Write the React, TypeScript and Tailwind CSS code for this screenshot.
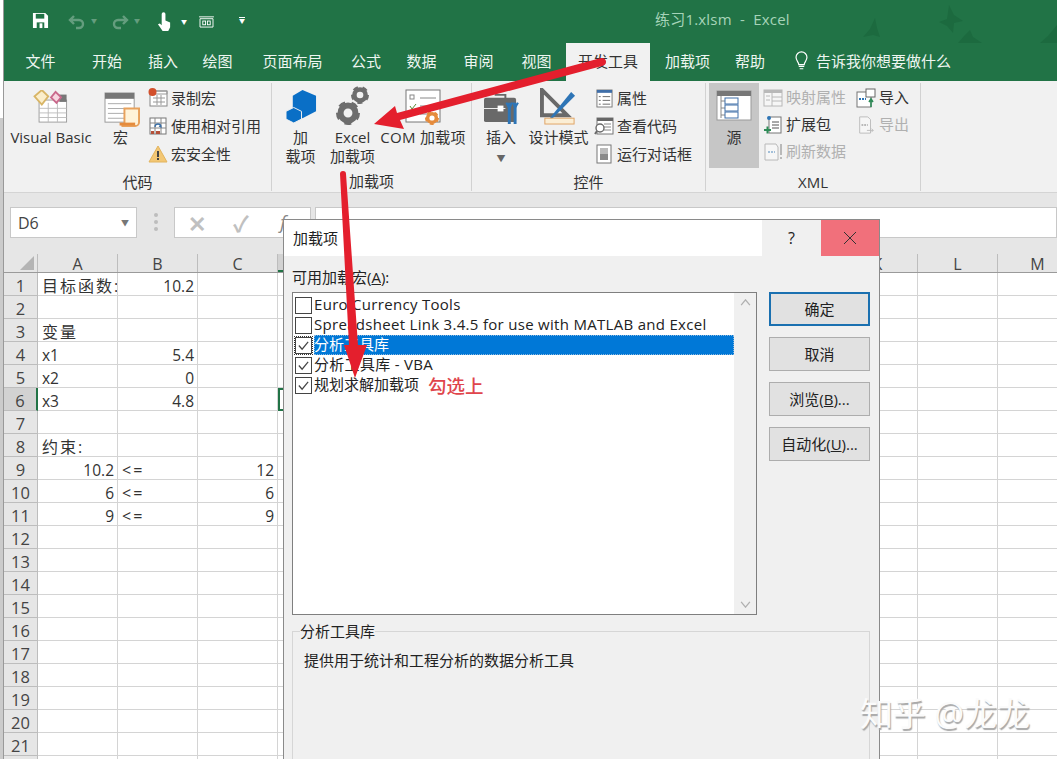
import type { ReactNode } from "react";

const TABS = [
  ["文件", "w-[73px]"],
  ["开始", "w-[60px]"],
  ["插入", "w-[52px]"],
  ["绘图", "w-[57px]"],
  ["页面布局", "w-[93px]"],
  ["公式", "w-[54px]"],
  ["数据", "w-[57px]"],
  ["审阅", "w-[57px]"],
  ["视图", "w-[59px]"],
];

const COLS = ["A", "B", "C", "D", "E", "F", "G", "H", "I", "J", "K", "L", "M"];

// value, right aligned, wide-set text
const CELLS: Record<string, [string, boolean?, boolean?]> = {
  A1: ["目标函数:", false, true],
  B1: ["10.2", true],
  A3: ["变量", false, true],
  A4: ["x1"],
  B4: ["5.4", true],
  A5: ["x2"],
  B5: ["0", true],
  A6: ["x3"],
  B6: ["4.8", true],
  A8: ["约束:", false, true],
  A9: ["10.2", true],
  B9: ["<=", false, true],
  C9: ["12", true],
  A10: ["6", true],
  B10: ["<=", false, true],
  C10: ["6", true],
  A11: ["9", true],
  B11: ["<=", false, true],
  C11: ["9", true],
};

const ADDINS = [
  { name: "Euro Currency Tools", checked: false, latin: true },
  { name: "Spreadsheet Link 3.4.5 for use with MATLAB and Excel", checked: false, latin: true },
  { name: "分析工具库", checked: true, active: true },
  { name: "分析工具库 - VBA", checked: true, latin: true },
  { name: "规划求解加载项", checked: true },
];

function Gear({ x, y, r, fill = "#6d6d6d" }: { x: number; y: number; r: number; fill?: string }) {
  return (
    <g>
      <circle cx={x} cy={y} r={r * 0.62} fill="none" stroke={fill} strokeWidth={r * 0.5} />
      <circle cx={x} cy={y} r={r * 0.86} fill="none" stroke={fill} strokeWidth={r * 0.28} strokeDasharray={`${r * 0.55} ${r * 0.53}`} />
    </g>
  );
}

function BigButton({ w, icon, label, label2, wide }: { w: string; icon: ReactNode; label: string; label2?: ReactNode; wide?: boolean }) {
  return (
    <div className={`${w} flex flex-col items-center shrink-0`}>
      <div className="h-[44px] flex items-end justify-center">{icon}</div>
      <div className={`mt-[1px] leading-[19px] text-center whitespace-nowrap ${wide ? "tracking-[0.3px]" : ""}`}>{label}</div>
      {label2 && <div className="leading-[19px] text-center whitespace-nowrap">{label2}</div>}
    </div>
  );
}

function SmallRow({ icon, label, muted, h = "h-[28px]" }: { icon: ReactNode; label: string; muted?: boolean; h?: string }) {
  return (
    <div className={`${h} flex items-center gap-[3px] whitespace-nowrap`}>
      <div className="w-[20px] flex justify-center">{icon}</div>
      <span className={muted ? "text-[#b0b0b0]" : ""}>{label}</span>
    </div>
  );
}

function RibbonGroup({ w, label, children }: { w: string; label: string; children: ReactNode }) {
  return (
    <div className={`${w} h-[108px] mt-[2px] border-r border-[#d2d2d2] flex flex-col shrink-0`}>
      <div className="flex h-[86px]">{children}</div>
      <div className="text-center leading-[20px] mt-[4px]">{label}</div>
    </div>
  );
}

function Ribbon() {
  return (
    <div className="h-[112px] bg-[#f1f1f1] border-b border-[#d4d4d4] flex text-[15px] text-[#333]">
      <RibbonGroup w="w-[268px]" label="代码">
        <div className="w-[3px] shrink-0" />
        <BigButton
          w="w-[88px]"
          label="Visual Basic"
          icon={
            <svg viewBox="0 0 38 36" className="w-[36px] h-[33px] mb-[4px]">
              <rect x="6" y="11" width="30" height="24" fill="#fff" stroke="#999" />
              <rect x="28" y="5" width="8" height="8" fill="#777" />
              <path d="M6 20h30M6 25h30M6 30h30M16 14v21M26 14v21" stroke="#bbb" fill="none" />
              <path d="M9 0l7 7-7 9-8-9z" fill="#fbeecb" stroke="#d8b566" strokeWidth="2" />
              <path d="M24 2l6 6-5 6-6-6z" fill="#f7d6e0" stroke="#c9688b" strokeWidth="2" />
            </svg>
          }
        />
        <BigButton
          w="w-[51px]"
          label="宏"
          icon={
            <svg viewBox="0 0 38 36" className="w-[37px] h-[35px] ml-[3px]">
              <rect x="1" y="1" width="30" height="30" fill="#fff" stroke="#999" />
              <rect x="1" y="1" width="30" height="6" fill="#777" />
              <path d="M4 12h24M4 17h24M4 22h24M4 27h24" stroke="#aaa" />
              <path d="M21 17h15v14a4 4 0 0 1-4 4H18a4 4 0 0 0 3-4z" fill="#fff3d9" stroke="#e8a15c" strokeWidth="2" />
              <path d="M16 33h16" stroke="#e58b3c" strokeWidth="3" />
            </svg>
          }
        />
        <div className="ml-[2px] mt-[1px]">
          <SmallRow
            label="录制宏"
            icon={
              <svg viewBox="0 0 20 20" className="w-[20px] h-[20px]">
                <rect x="2" y="3" width="17" height="15" fill="#fff" stroke="#888" />
                <path d="M2 3h17v3H2zM5 10h12M5 14h12M9 7v10M13 7v10" stroke="#999" fill="none" />
                <circle cx="4.500" cy="4" r="4" fill="#d2502c" />
              </svg>
            }
          />
          <SmallRow
            label="使用相对引用"
            icon={
              <svg viewBox="0 0 20 20" className="w-[20px] h-[20px]">
                <rect x="2" y="2" width="16" height="16" fill="#fff" stroke="#777" />
                <path d="M2 7h16M2 12h16M7 2v16M13 2v16" stroke="#888" />
                <path d="M7 11a3 3 0 0 1 6 0l-2-1" stroke="#3a6ea5" fill="none" strokeWidth="1.300" />
                <path d="M3 15h3v3H3zM8 15h4v3H8z" fill="#b5513a" />
              </svg>
            }
          />
          <SmallRow
            label="宏安全性"
            icon={
              <svg viewBox="0 0 20 20" className="w-[20px] h-[20px]">
                <path d="M10 2l9 16H1z" fill="#f3c774" stroke="#e2b45f" />
                <path d="M9 7h2v6H9zM9 14h2v2H9z" fill="#444" />
              </svg>
            }
          />
        </div>
      </RibbonGroup>

      <RibbonGroup w="w-[200px]" label="加载项">
        <BigButton
          w="w-[57px]"
          label="加"
          label2="载项"
          icon={
            <svg viewBox="0 0 32 34" className="w-[31px] h-[33px] mb-[4px] -mr-[2px]">
              <path d="M17 0l14 6v16l-14 7-10-5V6z" fill="#0a6fc6" />
              <path d="M8 18l8 4v8l-8 4-8-4v-8z" fill="#0a6fc6" stroke="#f1f1f1" strokeWidth="1" />
            </svg>
          }
        />
        <BigButton
          w="w-[47px]"
          label="Excel"
          label2="加载项"
          icon={
            <svg viewBox="0 0 34 40" className="w-[34px] h-[40px] mb-[1px]">
              <Gear x={24} y={9} r={9} />
              <Gear x={12} y={27} r={12} />
            </svg>
          }
        />
        <BigButton
          w="w-[94px]"
          wide
          label="COM 加载项"
          icon={
            <svg viewBox="0 0 36 36" className="w-[36px] h-[36px] mb-[2px]">
              <rect x="1" y="1" width="34" height="32" fill="#fff" stroke="#777" />
              <path d="M15 9h16M15 17h16M15 25h8" stroke="#888" />
              <rect x="5" y="6" width="4" height="4" fill="none" stroke="#888" />
              <path d="M5 17l2 3 4-5" stroke="#5d8a3a" fill="none" />
              <Gear x={27} y={29} r={7} fill="#e58b3c" />
            </svg>
          }
        />
      </RibbonGroup>

      <RibbonGroup w="w-[234px]" label="控件">
        <BigButton
          w="w-[58px]"
          label="插入"
          label2={<span className="text-[9px] text-[#666]">▼</span>}
          icon={
            <svg viewBox="0 0 38 36" className="w-[37px] h-[35px] mb-[1px]">
              <rect x="1" y="7" width="33" height="25" rx="2" fill="#696969" />
              <path d="M12 4h11v4" stroke="#696969" fill="none" strokeWidth="2" />
              <path d="M1 18h22" stroke="#f1f1f1" />
              <rect x="15" y="15" width="6" height="6" fill="#fff" />
              <path d="M27 12v22M33 12v22" stroke="#2e75b6" strokeWidth="3" />
              <path d="M24 12l3 6 3-6M31 12l2 5 3-5" stroke="#2e75b6" fill="none" strokeWidth="2" />
            </svg>
          }
        />
        <BigButton
          w="w-[57px]"
          label="设计模式"
          icon={
            <svg viewBox="0 0 38 38" className="w-[37px] h-[37px] mb-[2px]">
              <path d="M2 2v26h26z" fill="none" stroke="#696969" strokeWidth="4" />
              <path d="M10 31L32 4l4 4-24 24z" fill="#2e75b6" />
              <rect x="5" y="31" width="30" height="6" fill="#fbeed5" stroke="#e0a465" />
            </svg>
          }
        />
        <div className="ml-[7px] mt-[1px]">
          <SmallRow
            label="属性"
            icon={
              <svg viewBox="0 0 18 20" className="w-[17px] h-[19px]">
                <rect x="1" y="1" width="16" height="18" fill="#fff" stroke="#777" />
                <rect x="1" y="1" width="16" height="3" fill="#3f6ea8" />
                <path d="M7 8h8M7 12h8M7 16h8M3 8h2M3 12h2M3 16h2" stroke="#666" />
              </svg>
            }
          />
          <SmallRow
            label="查看代码"
            icon={
              <svg viewBox="0 0 20 20" className="w-[20px] h-[20px]">
                <rect x="3" y="2" width="16" height="16" fill="#fff" stroke="#777" />
                <rect x="3" y="2" width="16" height="3" fill="#666" />
                <path d="M10 8h7M10 11h7M10 14h7" stroke="#888" />
                <circle cx="6" cy="12" r="4" fill="#fff" stroke="#6a6a6a" strokeWidth="1.400" />
                <path d="M3 15l-2 3" stroke="#6a6a6a" strokeWidth="2" />
              </svg>
            }
          />
          <SmallRow
            label="运行对话框"
            icon={
              <svg viewBox="0 0 16 20" className="w-[16px] h-[20px]">
                <rect x="1" y="1" width="14" height="18" fill="#fff" stroke="#777" />
                <rect x="4" y="4" width="8" height="12" fill="#bbb" />
                <rect x="4" y="10" width="8" height="6" fill="#8a8a8a" />
              </svg>
            }
          />
        </div>
      </RibbonGroup>

      <RibbonGroup w="w-[215px]" label="XML">
        <div className="ml-[3px] w-[50px] h-[85px] bg-[#c6c6c6] flex flex-col items-center pt-[7px] shrink-0">
          <svg viewBox="0 0 36 32" className="w-[36px] h-[32px]">
            <rect x="1" y="1" width="34" height="29" fill="#fff" stroke="#999" />
            <rect x="1" y="1" width="34" height="5" fill="#777" />
            <path d="M5 6v22M5 11h4M5 18h4M5 25h4" stroke="#888" fill="none" />
            <rect x="9" y="8" width="13" height="6" fill="#fff" stroke="#3f6ea8" />
            <rect x="9" y="15" width="13" height="6" fill="#fff" stroke="#3f6ea8" />
            <rect x="9" y="22" width="13" height="6" fill="#fff" stroke="#3f6ea8" />
          </svg>
          <div className="mt-[4px] leading-[22px]">源</div>
        </div>
        <div className="ml-[4px] w-[93px] mt-[1px] shrink-0">
          <SmallRow
            muted
            h="h-[27px]"
            label="映射属性"
            icon={
              <svg viewBox="0 0 20 20" className="w-[20px] h-[20px] opacity-40">
                <rect x="1" y="2" width="18" height="16" fill="#fff" stroke="#666" />
                <rect x="1" y="2" width="18" height="3" fill="#666" />
                <path d="M9 5v13M9 9h10M9 13h10M3 8h4M3 12h4" stroke="#666" />
              </svg>
            }
          />
          <SmallRow
            h="h-[27px]"
            label="扩展包"
            icon={
              <svg viewBox="0 0 20 20" className="w-[20px] h-[20px]">
                <rect x="6" y="2" width="12" height="16" fill="#fff" stroke="#777" />
                <path d="M9 7h7M9 10h7M9 13h7" stroke="#555" />
                <circle cx="6" cy="3" r="2" fill="#2e75b6" />
                <path d="M1 15h7M4.500 11.500v7" stroke="#2e8b57" strokeWidth="2" />
              </svg>
            }
          />
          <SmallRow
            muted
            h="h-[27px]"
            label="刷新数据"
            icon={
              <svg viewBox="0 0 20 20" className="w-[20px] h-[20px] opacity-40">
                <path d="M2 2h11l2 3v13H2z" fill="#fff" stroke="#666" />
                <path d="M5 10h7" stroke="#2e75b6" strokeWidth="2" strokeDasharray="2 1" />
                <path d="M18 2v11M18 15v2" stroke="#666" strokeWidth="2" />
              </svg>
            }
          />
        </div>
        <div className="mt-[1px]">
          <SmallRow
            h="h-[27px]"
            label="导入"
            icon={
              <svg viewBox="0 0 20 20" className="w-[20px] h-[20px]">
                <rect x="1" y="4" width="14" height="15" fill="#fff" stroke="#777" />
                <rect x="10" y="1" width="9" height="8" fill="#fff" stroke="#666" />
                <path d="M3 11h7" stroke="#2e75b6" strokeWidth="2" strokeDasharray="2 1" />
                <path d="M15 19v-7m-2 2l2-3 2 3" stroke="#2e8b57" strokeWidth="1.600" fill="none" />
              </svg>
            }
          />
          <SmallRow
            muted
            h="h-[27px]"
            label="导出"
            icon={
              <svg viewBox="0 0 20 20" className="w-[18px] h-[20px] opacity-40">
                <path d="M3 1h9l3 3v15H3z" fill="#fff" stroke="#666" />
                <path d="M5 10h7" stroke="#666" strokeWidth="2" strokeDasharray="2 1" />
                <path d="M11 16h7m-2-2l2 2-2 2" stroke="#666" fill="none" />
              </svg>
            }
          />
        </div>
      </RibbonGroup>
    </div>
  );
}

function Header() {
  return (
    <div className="bg-[#217346] h-[81px] relative">
      <div className="h-[43px] flex items-center text-white">
        <svg viewBox="0 0 18 18" className="ml-[28px] w-[17px] h-[17px] -mt-[2px]">
          <path d="M1 1h13l3 3v13H1z" fill="#fff" />
          <rect x="4" y="2" width="9" height="5" fill="#217346" />
          <rect x="5" y="11" width="8" height="6" fill="#217346" />
          <rect x="8" y="12" width="3" height="5" fill="#fff" />
        </svg>
        <svg viewBox="0 0 18 16" className="ml-[19px] w-[18px] h-[16px] opacity-30">
          <path d="M6 2L2 6l4 4M2 6h9a4 4 0 0 1 0 8H8" fill="none" stroke="#fff" strokeWidth="2.400" />
        </svg>
        <span className="ml-[5px] text-[6px] opacity-30">▼</span>
        <svg viewBox="0 0 18 16" className="ml-[14px] w-[18px] h-[16px] opacity-30">
          <path d="M12 2l4 4-4 4M16 6H7a4 4 0 0 0 0 8h3" fill="none" stroke="#fff" strokeWidth="2.400" />
        </svg>
        <span className="ml-[5px] text-[6px] opacity-30">▼</span>
        <svg viewBox="0 0 16 20" className="ml-[17px] w-[15px] h-[19px]">
          <path d="M5 2a2 2 0 0 1 4 0v7l5 2v5l-2 4H6l-5-7 2-1 2 2z" fill="#fff" />
        </svg>
        <span className="ml-[9px] text-[6px] leading-none">▼</span>
        <svg viewBox="0 0 18 14" className="ml-[11px] w-[17px] h-[13px]">
          <path d="M1 2h16M2 4h14v9H2z" fill="none" stroke="#fff" />
          <rect x="5" y="6.500" width="3" height="4" fill="none" stroke="#fff" />
          <rect x="10" y="6.500" width="3" height="4" fill="none" stroke="#fff" />
        </svg>
        <span className="ml-[24px] text-[6px] leading-none -mt-[2px] border-t border-white">▼</span>
        <div className="absolute left-[651px] top-[8px] text-[15px] tracking-[0.2px] text-[#a6d3b9] whitespace-pre">练习1.xlsm  -  Excel</div>
        <svg viewBox="0 0 200 44" className="absolute right-0 top-0 w-[200px] h-[44px]">
          <path d="M6 37l7-8 5-11 2 10 3 9-7-2z" fill="#1c6a3f" />
          <path d="M82 22l8-3 2-14 5 10 9 6-9 2-1 10-6-7z" fill="#1c6a3f" />
          <path d="M101 43l7-8 5-5 3 7 9 6z" fill="#1c6a3f" />
          <path d="M183 43l8-7 9-11v18z" fill="#1c6a3f" />
        </svg>
      </div>
      <div className="h-[38px] flex text-[15px] text-[#eef6f1]">
        {TABS.map(([t, w]) => (
          <div key={t} className={`${w} flex items-center justify-center pb-[2px]`}>
            {t}
          </div>
        ))}
        <div className="w-[84px] bg-[#f1f1f1] text-[#333] flex items-center justify-center pb-[2px]">开发工具</div>
        <div className="w-[75px] flex items-center justify-center pb-[2px]">加载项</div>
        <div className="w-[50px] flex items-center justify-center pb-[2px]">帮助</div>
        <div className="ml-[19px] flex items-center gap-[7px] pb-[2px]">
          <svg viewBox="0 0 16 22" className="w-[15px] h-[20px]">
            <path d="M5 15c0-3-3-4-3-8a6 6 0 0 1 12 0c0 4-3 5-3 8z" fill="none" stroke="#fff" strokeWidth="1.300" />
            <path d="M5 17h6M6 19.500h4" stroke="#fff" strokeWidth="1.300" />
          </svg>
          <span>告诉我你想要做什么</span>
        </div>
      </div>
    </div>
  );
}

function FormulaBar() {
  return (
    <div className="h-[61px] bg-[#e6e6e6] flex items-start pt-[14px]">
      <div className="ml-[6px] w-[127px] h-[31px] bg-white border border-[#c8c8c8] flex items-center justify-between pl-[7px] pr-[7px] text-[16px] text-[#444]">
        D6
        <span className="text-[8px] text-[#777]">▼</span>
      </div>
      <div className="ml-[17px] w-[4px] h-[18px] mt-[6px] border-l-[4px] border-dotted border-[#bdbdbd]" />
      <div className="ml-[16px] w-[137px] h-[31px] bg-white border border-[#c8c8c8] flex items-center text-[#c0c0c0]">
        <span className="w-[44px] text-center text-[22px] font-bold leading-none">✕</span>
        <span className="w-[44px] text-center text-[22px] font-bold leading-none">✓</span>
        <span className="w-[40px] text-center italic text-[#888] text-[18px]">f</span>
      </div>
      <div className="ml-[4px] flex-1 h-[31px] bg-white border border-[#c8c8c8]" />
    </div>
  );
}

function Sheet() {
  const rows = Array.from({ length: 22 }, (_, i) => i + 1);
  return (
    <div className="bg-white">
      <div className="flex h-[19px] bg-[#e6e6e6] border-b border-[#9a9a9a] text-[16px] text-[#444]">
        <div className="w-[34px] flex justify-end items-end pr-[3px] pb-[2px] shrink-0 border-r border-[#bdbdbd]">
          <div className="w-0 h-0 border-l-[14px] border-l-transparent border-b-[14px] border-b-[#b4b4b4]" />
        </div>
        {COLS.map((c) => (
          <div
            key={c}
            className={`w-[80px] shrink-0 leading-[20px] text-center border-r border-[#bdbdbd] ${c === "D" ? "bg-[#d2d2d2] border-b-2 border-b-[#217346]" : ""}`}
          >
            {c}
          </div>
        ))}
      </div>
      {rows.map((r) => (
        <div key={r} className="flex h-[23px] text-[15.5px] text-[#333]">
          <div
            className={`w-[34px] shrink-0 overflow-hidden text-center text-[16.5px] text-[#444] leading-[26px] border-b border-r border-[#bdbdbd] ${r === 6 ? "bg-[#d2d2d2] border-r-2 border-r-[#217346]" : "bg-[#e6e6e6]"}`}
          >
            {r < 22 ? r : null}
          </div>
          {COLS.map((c) => {
            const cell = CELLS[`${c}${r}`];
            const selected = c === "D" && r === 6;
            return (
              <div
                key={c}
                className={`w-[80px] shrink-0 overflow-hidden whitespace-nowrap leading-[26px] pl-[4px] pr-[3px] ${cell?.[1] ? "text-right" : "text-left"} ${cell?.[2] ? "tracking-[2px] text-[16px]" : ""} ${selected ? "border-2 border-[#217346]" : "border-b border-r border-[#d4d4d4]"}`}
              >
                {cell?.[0]}
              </div>
            );
          })}
        </div>
      ))}
    </div>
  );
}

function CheckBox({ checked, focus }: { checked: boolean; focus?: boolean }) {
  return (
    <div className={`w-[17px] h-[17px] shrink-0 bg-white border border-[#444] flex items-center justify-center ${focus ? "outline-1 outline-dotted outline-[#333]" : ""}`}>
      {checked && (
        <svg viewBox="0 0 14 14" className="w-[13px] h-[13px]">
          <path d="M2 7l3.500 4L12 3" fill="none" stroke="#444" strokeWidth="1.300" />
        </svg>
      )}
    </div>
  );
}

function DialogButton({ label, primary }: { label: ReactNode; primary?: boolean }) {
  return (
    <div
      className={`w-[101px] h-[34px] flex items-center justify-center bg-[#e1e1e1] ${primary ? "border-2 border-[#1a70b0]" : "border border-[#adadad]"}`}
    >
      {label}
    </div>
  );
}

function AddinDialog() {
  return (
    <div className="absolute left-[283px] top-[219px] w-[597px] h-[560px] bg-[#f0f0f0] border border-[#8a8a8a] text-[15px] text-[#222]">
      <div className="h-[36px] bg-white flex items-stretch">
        <div className="flex-1 flex items-center pl-[9px]">加载项</div>
        <div className="w-[59px] bg-[#f0f0f0] flex items-center justify-center text-[16px]">?</div>
        <div className="w-[58px] bg-[#f1707b] flex items-center justify-center">
          <svg viewBox="0 0 14 14" className="w-[14px] h-[14px]">
            <path d="M1 1l12 12M13 1L1 13" stroke="#333" strokeWidth="1" />
          </svg>
        </div>
      </div>
      <div className="px-[8px] pt-[11px]">
        <div className="leading-[20px] mb-[5px]">
          可用加载宏(<span className="underline">A</span>):
        </div>
        <div className="flex">
          <div className="w-[465px] h-[323px] bg-white border border-[#7f7f7f] flex">
            <div className="flex-1 pt-[2px] pl-[2px]">
              {ADDINS.map((a) => (
                <div key={a.name} className="h-[20px] flex items-center gap-[2px] whitespace-nowrap">
                  <CheckBox checked={a.checked} focus={a.active} />
                  <span
                    className={`flex-1 leading-[19px] h-[20px] ${a.latin ? "tracking-[0.3px]" : ""} ${a.active ? "bg-[#0078d7] text-white outline-1 outline-dotted outline-[#8ab8df] -outline-offset-1" : ""}`}
                  >
                    {a.name}
                  </span>
                </div>
              ))}
            </div>
            <div className="w-[22px] bg-[#f0f0f0] flex flex-col items-center justify-between py-[3px]">
              <svg viewBox="0 0 12 8" className="w-[11px] h-[7px] mt-[3px]">
                <path d="M1 7l5-6 5 6" fill="none" stroke="#b0b0b0" strokeWidth="1.500" />
              </svg>
              <svg viewBox="0 0 12 8" className="w-[11px] h-[7px] mb-[3px]">
                <path d="M1 1l5 6 5-6" fill="none" stroke="#b0b0b0" strokeWidth="1.500" />
              </svg>
            </div>
          </div>
          <div className="ml-[12px] flex flex-col gap-[11px]">
            <DialogButton primary label="确定" />
            <DialogButton label="取消" />
            <DialogButton
              label={
                <>
                  浏览(<span className="underline">B</span>)...
                </>
              }
            />
            <DialogButton
              label={
                <>
                  自动化(<span className="underline">U</span>)...
                </>
              }
            />
          </div>
        </div>
        <div className="mt-[16px] w-[578px] h-[200px] border border-[#d6d6d6] relative px-[11px] pt-[18px]">
          <span className="absolute left-[7px] -top-[11px] leading-[20px] bg-[#f0f0f0]">分析工具库</span>
          <div className="leading-[20px]">提供用于统计和工程分析的数据分析工具</div>
        </div>
      </div>
      <div className="absolute left-[144px] top-[154px] text-[18.500px] leading-[24px] font-medium text-[#e0454c]">勾选上</div>
    </div>
  );
}

export default function App() {
  return (
    <div className="relative w-[1057px] h-[759px] overflow-hidden flex bg-white font-['Open_Sans','Noto_Sans_CJK_SC',sans-serif]">
      <div className="w-[4px] shrink-0 flex flex-col border-r border-[#999]">
        <div className="h-[118px] bg-white" />
        <div className="flex-1 bg-[#cbcbcb]" />
      </div>
      <div className="w-[1053px] shrink-0">
        <Header />
        <Ribbon />
        <FormulaBar />
        <Sheet />
      </div>
      <AddinDialog />
      <svg viewBox="0 0 1057 759" className="absolute inset-0 w-[1057px] h-[759px] pointer-events-none">
        <path d="M601 58Q606 58 606 62Q606 65 602 66L400 120L404 129L374 124L395 106L397 113Z" fill="#e41f2d" />
        <path d="M340 174Q340 171 343 171Q346 171 346 174L358 345L367 345L355 378L344 345L349 345Z" fill="#e41f2d" />
      </svg>
      <div className="absolute left-[860px] top-[692px] text-[33px] leading-[44px] whitespace-pre text-[#fbfbfb] [text-shadow:1px_2px_1px_#a8a8a8]">
        知乎 @龙龙
      </div>
    </div>
  );
}
